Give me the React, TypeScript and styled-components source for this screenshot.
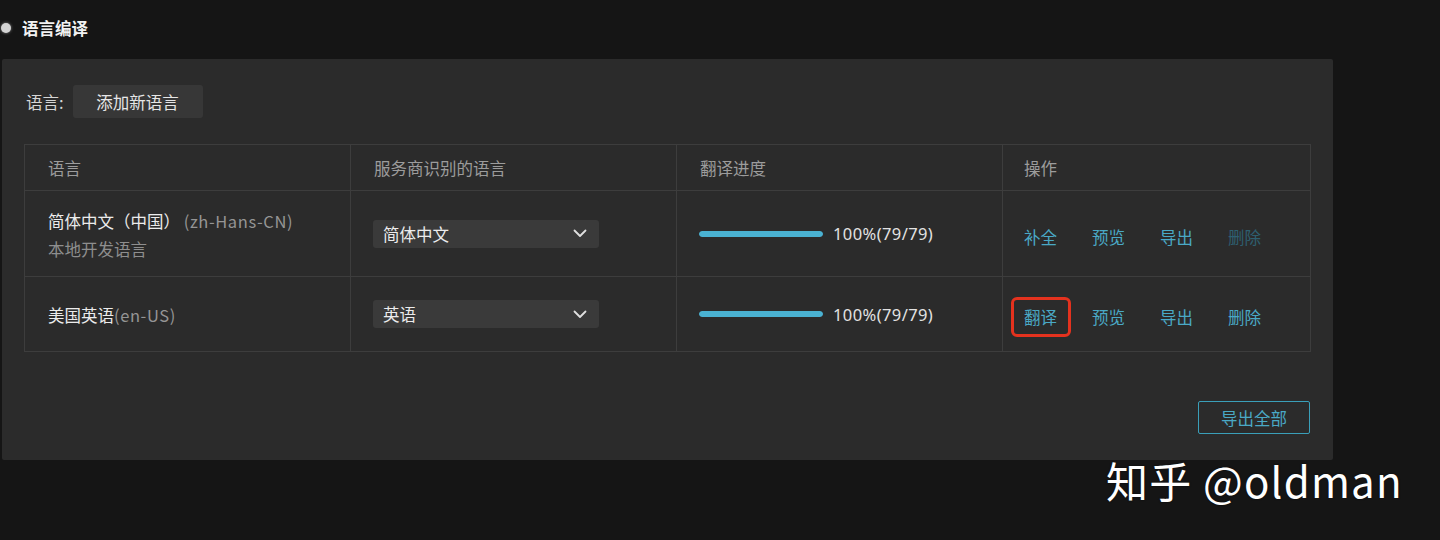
import React from "react";
import styled, { createGlobalStyle } from "styled-components";

const Global = createGlobalStyle`
  html, body { margin: 0; padding: 0; background: #151515; }
  body {
    font-family: "Noto Sans CJK SC", "Noto Sans", "Liberation Sans", sans-serif;
    color: #e2e2e2;
    width: 1440px;
    height: 540px;
    overflow: hidden;
  }
`;

const Page = styled.div`
  position: relative;
  width: 1440px;
  height: 540px;
  padding-top: 16px;
  box-sizing: border-box;
`;

const TitleRow = styled.div`
  display: flex;
  align-items: center;
  gap: 11px;
  height: 24px;
  padding-left: 1px;
`;

const Dot = styled.span`
  width: 10px;
  height: 10px;
  border-radius: 50%;
  background: #d4d4d4;
  box-shadow: 0 0 3px rgba(255, 255, 255, 0.5);
`;

const Title = styled.h2`
  margin: 0;
  font-size: 16.5px;
  font-weight: 700;
  color: #f2f2f2;
  line-height: 24px;
`;

const Panel = styled.section`
  margin: 19px 0 0 2px;
  width: 1331px;
  height: 401px;
  box-sizing: border-box;
  background: #2b2b2b;
  border-radius: 2px;
  padding: 26px 23px 26px 22px;
  display: flex;
  flex-direction: column;
`;

const Toolbar = styled.div`
  display: flex;
  align-items: center;
  gap: 9px;
  height: 33px;
`;

const Label = styled.span`
  font-size: 16.5px;
  color: #d6d6d6;
  padding-left: 2px;
`;

const GreyButton = styled.button`
  height: 33px;
  width: 130px;
  border: none;
  border-radius: 3px;
  background: #373737;
  color: #e6e6e6;
  font-family: inherit;
  font-size: 16.5px;
  padding: 0;
`;

const Table = styled.table`
  margin-top: 26px;
  width: 1286px;
  border-collapse: collapse;
  table-layout: fixed;
  font-size: 16.5px;
`;

const Th = styled.th<{ $w: number; $pl?: number }>`
  width: ${(p) => p.$w}px;
  height: 46px;
  border: 1px solid #3d3d3d;
  text-align: left;
  font-weight: 400;
  color: #9c9c9c;
  padding: 0 0 0 ${(p) => p.$pl ?? 23}px;
  box-sizing: border-box;
`;

const Tr = styled.tr<{ $h: number }>`
  height: ${(p) => p.$h}px;
`;

const Td = styled.td<{ $pl?: number }>`
  border: 1px solid #3d3d3d;
  padding: 0 0 0 ${(p) => p.$pl ?? 23}px;
  vertical-align: middle;
`;

const LangName = styled.div`
  color: #ececec;
  line-height: 28px;
  white-space: nowrap;
  padding-top: 2px;
`;

const Code = styled.span`
  color: #959595;
  letter-spacing: 0.6px;
`;

const SubNote = styled.div`
  color: #8e8e8e;
  line-height: 28px;
`;

const Select = styled.div`
  width: 226px;
  height: 28px;
  box-sizing: border-box;
  background: #3a3a3a;
  border-radius: 3px;
  display: flex;
  align-items: center;
  justify-content: space-between;
  padding: 0 12px 0 10px;
  color: #ececec;
  font-size: 16.5px;
`;

const Progress = styled.div`
  display: flex;
  align-items: center;
  gap: 10px;
`;

const Track = styled.div`
  width: 124px;
  height: 6px;
  border-radius: 3px;
  background: #2f3b40;
  overflow: hidden;
`;

const Fill = styled.div`
  height: 100%;
  background: #4ab2d2;
  border-radius: 3px;
`;

const Percent = styled.span`
  color: #e2e2e2;
  font-family: "Noto Sans", "Liberation Sans", sans-serif;
  font-size: 16.5px;
  letter-spacing: 0.4px;
`;

const Actions = styled.div`
  display: flex;
  align-items: center;
  gap: 35px;
  padding-top: 6px;
`;

const Action = styled.a<{ $disabled?: boolean; $marked?: boolean }>`
  position: relative;
  color: ${(p) => (p.$disabled ? "#2e5f70" : "#4aa9c6")};
  font-size: 16.5px;
  line-height: 22px;
  cursor: pointer;
  &::after {
    content: "";
    display: ${(p) => (p.$marked ? "block" : "none")};
    position: absolute;
    inset: -9px -14px -9px -13px;
    border: 3px solid #e4321e;
    border-radius: 6px;
  }
`;

const Footer = styled.div`
  margin-top: 49px;
  display: flex;
  justify-content: flex-end;
`;

const OutlineButton = styled.button`
  width: 112px;
  height: 33px;
  border: 1.5px solid #3a9fb9;
  border-radius: 2px;
  background: transparent;
  color: #4aa9c6;
  font-family: inherit;
  font-size: 16.5px;
  padding: 0;
`;

const Watermark = styled.div`
  position: absolute;
  left: 1106px;
  top: 452px;
  font-size: 42px;
  line-height: 56px;
  letter-spacing: 1.2px;
  color: #ffffff;
  white-space: nowrap;
  text-shadow: 0 0 2px rgba(0, 0, 0, 0.6);
  font-family: "Noto Sans CJK SC", "Noto Sans", sans-serif;
`;

const Chevron = () => (
  <svg width="14" height="9" viewBox="0 0 14 9" fill="none">
    <path d="M1.5 1.5 L7 7 L12.5 1.5" stroke="#e0e0e0" strokeWidth="1.8" strokeLinecap="round" strokeLinejoin="round" />
  </svg>
);

const rows = [
  {
    name: "简体中文（中国）",
    code: "(zh-Hans-CN)",
    note: "本地开发语言",
    provider: "简体中文",
    first: "补全",
    del: true,
  },
  {
    name: "美国英语",
    code: "(en-US)",
    note: "",
    provider: "英语",
    first: "翻译",
    del: false,
  },
];

export default function App() {
  return (
    <Page>
      <Global />
      <TitleRow>
        <Dot />
        <Title>语言编译</Title>
      </TitleRow>
      <Panel>
        <Toolbar>
          <Label>语言:</Label>
          <GreyButton>添加新语言</GreyButton>
        </Toolbar>
        <Table>
          <thead>
            <tr>
              <Th $w={326}>语言</Th>
              <Th $w={326}>服务商识别的语言</Th>
              <Th $w={326}>翻译进度</Th>
              <Th $w={308} $pl={21}>操作</Th>
            </tr>
          </thead>
          <tbody>
            {rows.map((r, i) => (
              <Tr key={r.name} $h={i === 0 ? 86 : 75}>
                <Td>
                  <LangName>
                    {r.name}
                    {i === 0 ? " " : ""}
                    <Code>{r.code}</Code>
                  </LangName>
                  {r.note && <SubNote>{r.note}</SubNote>}
                </Td>
                <Td $pl={22}>
                  <Select>
                    <span>{r.provider}</span>
                    <Chevron />
                  </Select>
                </Td>
                <Td $pl={22}>
                  <Progress>
                    <Track>
                      <Fill style={{ width: "100%" }} />
                    </Track>
                    <Percent>100%(79/79)</Percent>
                  </Progress>
                </Td>
                <Td $pl={21}>
                  <Actions>
                    <Action $marked={i === 1}>{r.first}</Action>
                    <Action>预览</Action>
                    <Action>导出</Action>
                    <Action $disabled={r.del}>删除</Action>
                  </Actions>
                </Td>
              </Tr>
            ))}
          </tbody>
        </Table>
        <Footer>
          <OutlineButton>导出全部</OutlineButton>
        </Footer>
      </Panel>
      <Watermark>知乎 @oldman</Watermark>
    </Page>
  );
}
